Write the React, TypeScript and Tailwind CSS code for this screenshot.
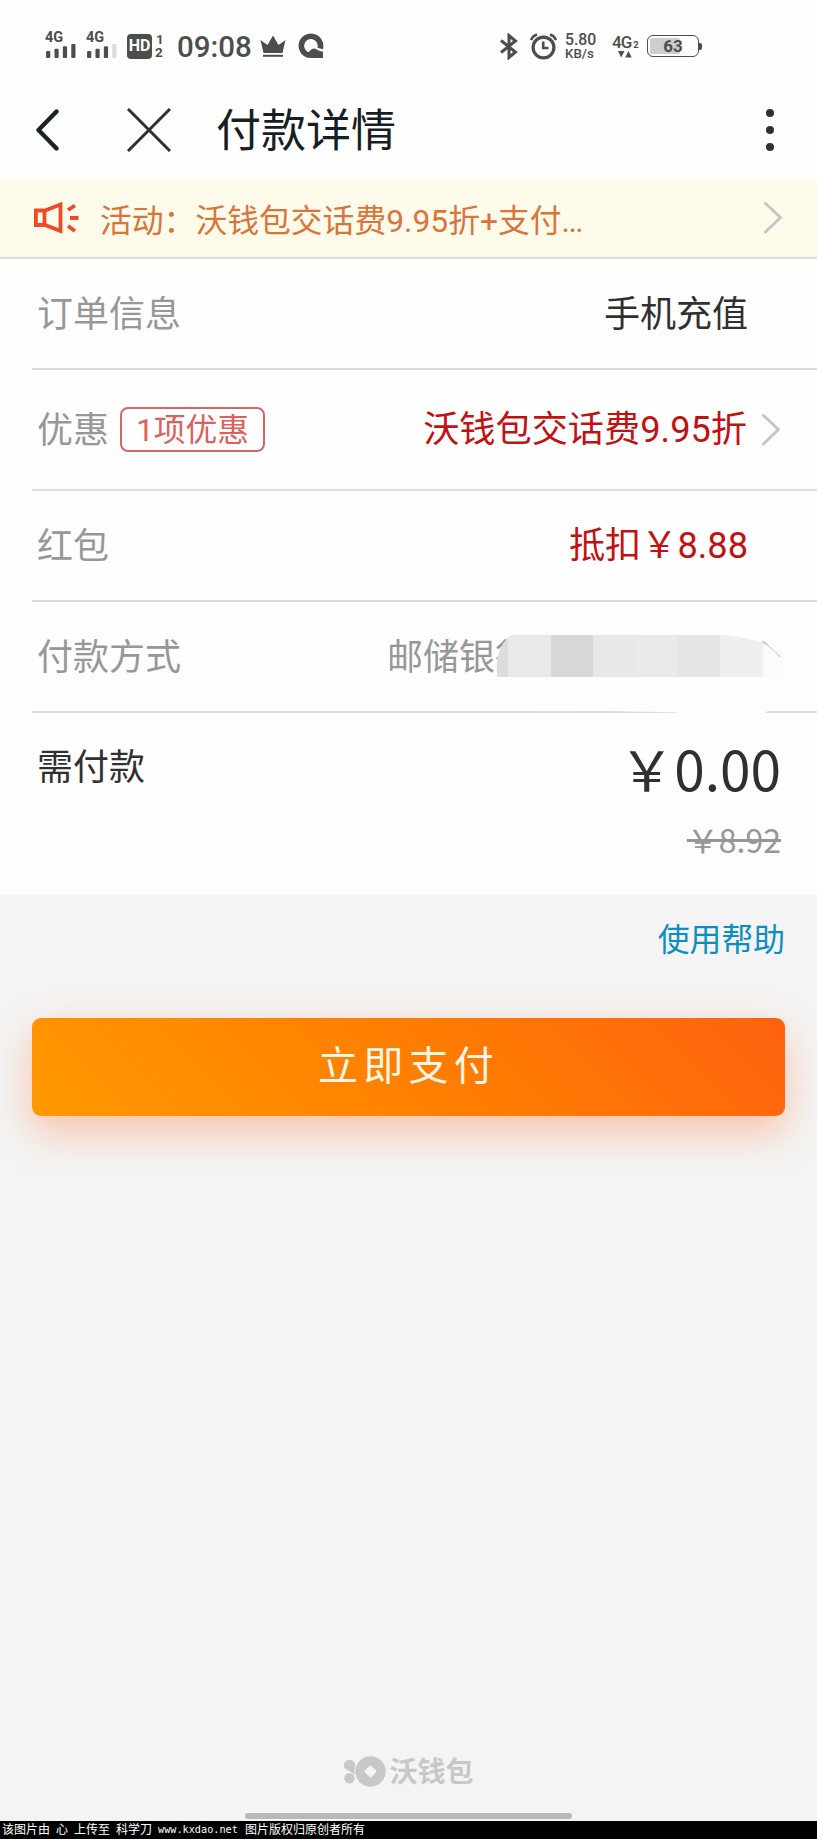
import type { ReactNode } from "react";

const SignalIcon = ({ weak = false }: { weak?: boolean }) => (
  <svg width="32" height="15" viewBox="0 0 32 15" fill="#4d4d4d">
    <rect x="0" y="7.5" width="4.5" height="7.5" rx="1.2" />
    <rect x="9" y="5" width="4.5" height="10" rx="1.2" />
    <rect x="18" y="2.5" width="4.5" height="12.5" rx="1.2" />
    <rect x="27" y="0" width="4.5" height="15" rx="1.2" fill={weak ? "#dcdcdc" : "#4d4d4d"} />
  </svg>
);

const Signal = ({ weak }: { weak?: boolean }) => (
  <div className="flex h-[26px] w-[32px] flex-col justify-between">
    <span className="h-[12px] text-[14.5px] leading-[12px] font-bold">4G</span>
    <SignalIcon weak={weak} />
  </div>
);

const CrownIcon = () => (
  <svg width="26" height="23" viewBox="0 0 26 23" fill="#4d4d4d">
    <path d="M3.5 18 L0.5 5 L7.5 10 L13 0.5 L18.5 10 L25.5 5 L22.5 18 Z" />
    <rect x="3" y="19.8" width="20" height="2" />
  </svg>
);

const BrowserIcon = () => (
  <svg width="26" height="26" viewBox="0 0 26 26">
    <path
      d="M11 22.3 A 9.6 9.6 0 1 1 22.2 15.5"
      fill="none"
      stroke="#4d4d4d"
      strokeWidth="5.6"
    />
    <path
      d="M8 21.5 C11 19.5 13 15.5 16 15.5 C19 15.5 21 19 25 18.4 V25 H13 C10.5 25 8.5 24 8 21.5 Z"
      fill="#4d4d4d"
    />
  </svg>
);

const BluetoothIcon = () => (
  <svg width="18" height="27" viewBox="0 0 18 27" fill="none" stroke="#4d4d4d" strokeWidth="3">
    <path d="M1 7.5 L15.5 19 L9 24.5 V2.5 L15.5 8 L1 19.5" />
  </svg>
);

const AlarmIcon = () => (
  <svg width="27" height="27" viewBox="0 0 27 27" fill="none" stroke="#4d4d4d">
    <circle cx="13.5" cy="14.5" r="10.4" strokeWidth="3.2" />
    <path d="M13.2 8.5 V15 H18.5" strokeWidth="2.6" />
    <path d="M1 7 Q2.5 3 7 1.5 M26 7 Q24.5 3 20 1.5" strokeWidth="2.4" />
  </svg>
);

const SpeakerIcon = () => (
  <svg width="46" height="34" viewBox="0 0 46 34" fill="none" stroke="#ee4a26" strokeWidth="3.8">
    <path d="M2.9 9.5 H12 L27.5 3.5 V30 L12 24 H2.9 Z M11.5 9.5 V24" />
    <path d="M35 9 L42 4.5 M37 17 H45.5 M35 25 L42 30" />
  </svg>
);

const ChevronRight = () => (
  <svg
    width="20"
    height="34"
    viewBox="0 0 20 34"
    fill="none"
    stroke="#c4c4c4"
    strokeWidth="3"
    strokeLinecap="round"
    strokeLinejoin="round"
  >
    <path d="M2.5 2.5 L17.5 16.5 L2.5 31" />
  </svg>
);

// Pixelated cover over the card number
const Mosaic = () => (
  <svg
    className="absolute top-[26px] left-[463px]"
    width="293.33"
    height="93.33"
    viewBox="375 145 880 280"
  >
    <defs>
      <clipPath id="blob">
        <path d="M425 165 C480 140 780 145 880 155 C970 155 1060 158 1172 186 C1195 198 1212 212 1228 232 C1240 250 1247 275 1245 300 C1240 370 1200 390 1180 402 C1130 415 1000 417 915 398 C850 396 800 398 735 393 C650 378 560 385 490 378 C430 365 395 335 382 293 C375 245 385 195 425 165 Z" />
      </clipPath>
    </defs>
    <g clipPath="url(#blob)" shapeRendering="crispEdges">
      <rect x="375" y="145" width="880" height="280" fill="#fdfdfd" />
      <rect x="375" y="165" width="40" height="128" fill="#dcdcdc" />
      <rect x="415" y="165" width="128" height="128" fill="#e9e9e9" />
      <rect x="543" y="165" width="126" height="128" fill="#d8d8d8" />
      <rect x="669" y="165" width="128" height="128" fill="#e8e8e8" />
      <rect x="797" y="165" width="125" height="128" fill="#eaeaea" />
      <rect x="922" y="165" width="128" height="128" fill="#e5e5e5" />
      <rect x="1050" y="165" width="128" height="128" fill="#efefef" />
      <rect x="1178" y="165" width="70" height="128" fill="#fbfbfb" />
    </g>
  </svg>
);

const WalletLogo = () => (
  <svg width="43" height="31" viewBox="0 0 43 31" fill="#c8c8c8">
    <circle cx="6.5" cy="9.5" r="5.7" />
    <path d="M1.8 12.5 L12.2 9.5 Q11 14 12.5 19 L9 17 Z" />
    <circle cx="6.5" cy="22.3" r="5.2" />
    <path d="M2 12.5 L9.5 17.5" stroke="#f4f4f4" strokeWidth="0.8" />
    <circle cx="27.5" cy="15.5" r="16" fill="#f4f4f4" />
    <circle cx="27.5" cy="15.5" r="15.2" />
    <path
      d="M27.5 10.5 L32.5 15.5 L27.5 20.5 L22.5 15.5 Z"
      fill="#f4f4f4"
      stroke="#f4f4f4"
      strokeWidth="2"
      strokeLinejoin="round"
    />
  </svg>
);

const StatusBar = () => (
  <div className="flex h-[92px] items-center pl-[45px] font-medium text-[#4d4d4d]">
    <div className="mt-[-2px] flex w-[82px] gap-[9px]">
      <Signal />
      <Signal weak />
    </div>
    <div className="flex h-[25px] w-[25px] items-center justify-center rounded-[4px] bg-[#4d4d4d] text-[16px] leading-none font-bold text-white">
      HD
    </div>
    <div className="ml-[3px] flex w-[22px] flex-col text-[13.5px] leading-[13.5px] font-bold">
      <span className="ml-[1px]">1</span>
      <span>2</span>
    </div>
    <span className="mt-[3px] w-[83px] text-[29.5px] leading-none">09:08</span>
    <div className="w-[38px]">
      <CrownIcon />
    </div>
    <div className="w-[202px]">
      <BrowserIcon />
    </div>
    <div className="w-[30px]">
      <BluetoothIcon />
    </div>
    <div className="w-[35px]">
      <AlarmIcon />
    </div>
    <div className="mt-[-1px] flex w-[47px] flex-col">
      <span className="text-[15.8px] leading-[15px]">5.80</span>
      <span className="text-[13.3px] leading-[13px]">KB/s</span>
    </div>
    <div className="flex w-[35px] flex-col">
      <div className="flex items-end leading-[16px]">
        <span className="text-[17px] tracking-[-1px]">4G</span>
        <span className="ml-[2px] text-[9.5px] leading-[11px] font-bold">2</span>
      </div>
      <svg className="ml-[6px]" width="14" height="8" viewBox="0 0 14 8" fill="#4d4d4d">
        <path d="M0 1 H6.5 L3.2 7.5 Z M7.2 7.5 H13.7 L10.5 1 Z" />
      </svg>
    </div>
    <div className="flex items-center">
      <div className="relative h-[22px] w-[52px] rounded-[6px] border-[1.5px] border-[#4d4d4d] p-[2px]">
        <div className="h-full w-[30px] rounded-[2px] bg-[#cdcdcd]" />
        <span className="absolute inset-0 flex items-center justify-center text-[17px] leading-none font-bold">
          63
        </span>
      </div>
      <div className="h-[7px] w-[3px] rounded-r-[2px] bg-[#4d4d4d]" />
    </div>
  </div>
);

const Header = () => (
  <div className="flex h-[86px] items-center pb-[10px] pl-[35px]">
    <svg width="25" height="42" viewBox="0 0 25 42" fill="none" stroke="#1a2328" strokeWidth="4.4">
      <path d="M21.5 2.5 L3.5 21 L21.5 39.5" strokeLinecap="round" strokeLinejoin="round" />
    </svg>
    <svg
      className="ml-[67px]"
      width="44"
      height="44"
      viewBox="0 0 44 44"
      fill="none"
      stroke="#303030"
      strokeWidth="3"
    >
      <path d="M1 1 L43 43 M43 1 L1 43" />
    </svg>
    <h1 className="mt-[3px] ml-[45px] text-[45px] leading-none text-[#171f24]">付款详情</h1>
    <div className="mr-[43px] ml-auto flex flex-col gap-[9px]">
      <span className="size-[8px] rounded-full bg-[#303030]" />
      <span className="size-[8px] rounded-full bg-[#303030]" />
      <span className="size-[8px] rounded-full bg-[#303030]" />
    </div>
  </div>
);

const Notice = () => (
  <div className="flex h-[81px] items-center border-b-2 border-[#dbdcd7] bg-[#fffbea] pl-[33px]">
    <SpeakerIcon />
    <span className="mt-[9px] ml-[21px] text-[31.8px] leading-none text-[#d9743a]">
      活动：沃钱包交话费9.95折+支付<span className="tracking-[-1.6px]">...</span>
    </span>
    <div className="mr-[34px] ml-auto">
      <ChevronRight />
    </div>
  </div>
);

type RowProps = {
  label: string;
  badge?: string;
  className: string;
  children: ReactNode;
};

const Row = ({ label, badge, className, children }: RowProps) => (
  <div
    className={`relative ml-[32px] flex items-center border-b-2 border-[#dcdcdc] pl-[5px] text-[36px] leading-none ${className}`}
  >
    <span className="pt-[2px] text-[#979797]">{label}</span>
    {badge && (
      <span className="ml-[11px] flex h-[45px] w-[145px] items-center justify-center rounded-[8px] border-2 border-[#d26866] pt-[3px] text-[31.8px] text-[#d9625d]">
        {badge}
      </span>
    )}
    {children}
  </div>
);

const App = () => {
  return (
    <div className="flex h-[1839px] w-[817px] flex-col overflow-hidden bg-[#f4f4f4] font-[Roboto,'Noto_Sans_CJK_SC',sans-serif]">
      <div className="h-[895px] bg-[#fefefe]">
        <StatusBar />
        <Header />
        <Notice />
        <Row label="订单信息" className="h-[111px]">
          <span className="mr-[69px] ml-auto pt-[2px] text-[#303030]">手机充值</span>
        </Row>
        <Row label="优惠" badge="1项优惠" className="h-[121px]">
          <span className="ml-auto pt-[2px] text-[36.2px] text-[#c11212]">沃钱包交话费9.95折</span>
          <div className="mr-[36px] ml-[14px]">
            <ChevronRight />
          </div>
        </Row>
        <Row label="红包" className="h-[111px]">
          <span className="mr-[69px] ml-auto pt-[1px] text-[36.2px] text-[#c11212]">抵扣￥8.88</span>
        </Row>
        <Row label="付款方式" className="h-[111px]">
          <span className="ml-[206px] pt-[2px] text-[#979797]">邮储银行</span>
          <div className="mr-[36px] ml-auto">
            <ChevronRight />
          </div>
          <Mosaic />
        </Row>
        <div className="flex justify-between pt-[30px] pr-[36px] pl-[37px] text-[#303030]">
          <span className="mt-[7px] text-[36px] leading-none">需付款</span>
          <div className="mt-[-4px] flex flex-col items-end font-['Noto_Sans_CJK_SC',sans-serif]">
            <span className="text-[55px] leading-[56px]">￥0.00</span>
            <span className="mt-[26px] text-[32px] leading-[36px] text-[#979797] line-through decoration-[3px]">
              ￥8.92
            </span>
          </div>
        </div>
      </div>

      <div className="flex justify-end pt-[30px] pr-[32px]">
        <a className="text-[31.8px] leading-none text-[#0a8fc4]">使用帮助</a>
      </div>
      <button className="mx-[32px] mt-[61px] flex h-[98px] shrink-0 items-center justify-center rounded-[9px] bg-linear-45 from-[#ff9900] via-[#ff7f00] to-[#ff610f] text-[40px] leading-none tracking-[5.2px] text-[#fff6e6] shadow-[0_16px_40px_rgba(255,130,75,0.45)]">
        立即支付
      </button>

      <div className="mt-auto flex items-center justify-center pb-[26px]">
        <WalletLogo />
        <span className="mt-[4px] ml-[3px] text-[28px] leading-none font-bold text-[#c8c8c8]">
          沃钱包
        </span>
      </div>
      <div className="mx-auto h-[6px] w-[327px] shrink-0 rounded-full bg-[#b9b9b9]" />
      <div className="mt-[2px] flex h-[18px] shrink-0 items-center bg-black pl-[2px] font-['DejaVu_Sans_Mono','Noto_Sans_CJK_SC',monospace] text-[12px] leading-none whitespace-nowrap text-white">
        <span>该图片由</span>
        <span className="ml-[6px]">心</span>
        <span className="ml-[6px]">上传至</span>
        <span className="ml-[6px]">科学刀</span>
        <span className="ml-[6px] w-[79px] text-[10.2px]">www.kxdao.net</span>
        <span className="ml-[8px]">图片版权归原创者所有</span>
      </div>
    </div>
  );
};

export default App;
